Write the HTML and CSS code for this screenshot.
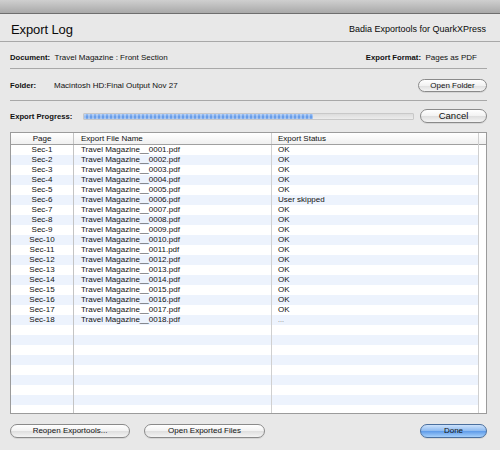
FILE: index.html
```html
<!DOCTYPE html>
<html>
<head>
<meta charset="utf-8">
<link rel="stylesheet" href="styles.css">
</head>
<body>
<div class="window">
  <div class="titlebar"></div>
  <div class="header">
    <div class="title">Export Log</div>
    <div class="brand">Badia Exportools for QuarkXPress</div>
  </div>
  <div class="section">
    <div class="row doc-row">
      <div><span class="lbl">Document:</span> <span class="val">Travel Magazine : Front Section</span></div>
      <div><span class="lbl">Export Format:</span> <span class="val">Pages as PDF</span></div>
    </div>
    <div class="row folder-row">
      <div class="folder"><span class="lbl lbl-folder">Folder:</span><span class="val">Macintosh HD:Final Output Nov 27</span></div>
      <button class="btn btn-small">Open Folder</button>
    </div>
    <div class="progress-row">
      <span class="lbl">Export Progress:</span>
      <div class="track"><div class="fill" style="width: 69.6%"></div></div>
      <button class="btn btn-cancel">Cancel</button>
    </div>
  </div>
  <div class="table">
    <div class="table-main">
      <div class="trow thead">
        <div class="c c1">Page</div>
        <div class="c c2">Export File Name</div>
        <div class="c c3">Export Status</div>
      </div>
      <div class="tbody">
        <div class="trow"><div class="c c1">Sec-1</div><div class="c c2">Travel Magazine__0001.pdf</div><div class="c c3">OK</div></div>
        <div class="trow"><div class="c c1">Sec-2</div><div class="c c2">Travel Magazine__0002.pdf</div><div class="c c3">OK</div></div>
        <div class="trow"><div class="c c1">Sec-3</div><div class="c c2">Travel Magazine__0003.pdf</div><div class="c c3">OK</div></div>
        <div class="trow"><div class="c c1">Sec-4</div><div class="c c2">Travel Magazine__0004.pdf</div><div class="c c3">OK</div></div>
        <div class="trow"><div class="c c1">Sec-5</div><div class="c c2">Travel Magazine__0005.pdf</div><div class="c c3">OK</div></div>
        <div class="trow"><div class="c c1">Sec-6</div><div class="c c2">Travel Magazine__0006.pdf</div><div class="c c3">User skipped</div></div>
        <div class="trow"><div class="c c1">Sec-7</div><div class="c c2">Travel Magazine__0007.pdf</div><div class="c c3">OK</div></div>
        <div class="trow"><div class="c c1">Sec-8</div><div class="c c2">Travel Magazine__0008.pdf</div><div class="c c3">OK</div></div>
        <div class="trow"><div class="c c1">Sec-9</div><div class="c c2">Travel Magazine__0009.pdf</div><div class="c c3">OK</div></div>
        <div class="trow"><div class="c c1">Sec-10</div><div class="c c2">Travel Magazine__0010.pdf</div><div class="c c3">OK</div></div>
        <div class="trow"><div class="c c1">Sec-11</div><div class="c c2">Travel Magazine__0011.pdf</div><div class="c c3">OK</div></div>
        <div class="trow"><div class="c c1">Sec-12</div><div class="c c2">Travel Magazine__0012.pdf</div><div class="c c3">OK</div></div>
        <div class="trow"><div class="c c1">Sec-13</div><div class="c c2">Travel Magazine__0013.pdf</div><div class="c c3">OK</div></div>
        <div class="trow"><div class="c c1">Sec-14</div><div class="c c2">Travel Magazine__0014.pdf</div><div class="c c3">OK</div></div>
        <div class="trow"><div class="c c1">Sec-15</div><div class="c c2">Travel Magazine__0015.pdf</div><div class="c c3">OK</div></div>
        <div class="trow"><div class="c c1">Sec-16</div><div class="c c2">Travel Magazine__0016.pdf</div><div class="c c3">OK</div></div>
        <div class="trow"><div class="c c1">Sec-17</div><div class="c c2">Travel Magazine__0017.pdf</div><div class="c c3">OK</div></div>
        <div class="trow"><div class="c c1">Sec-18</div><div class="c c2">Travel Magazine__0018.pdf</div><div class="c c3 dots">...</div></div>
        <div class="trow"><div class="c c1"></div><div class="c c2"></div><div class="c c3"></div></div>
        <div class="trow"><div class="c c1"></div><div class="c c2"></div><div class="c c3"></div></div>
        <div class="trow"><div class="c c1"></div><div class="c c2"></div><div class="c c3"></div></div>
        <div class="trow"><div class="c c1"></div><div class="c c2"></div><div class="c c3"></div></div>
        <div class="trow"><div class="c c1"></div><div class="c c2"></div><div class="c c3"></div></div>
        <div class="trow"><div class="c c1"></div><div class="c c2"></div><div class="c c3"></div></div>
        <div class="trow"><div class="c c1"></div><div class="c c2"></div><div class="c c3"></div></div>
        <div class="trow"><div class="c c1"></div><div class="c c2"></div><div class="c c3"></div></div>
        <div class="trow"><div class="c c1"></div><div class="c c2"></div><div class="c c3"></div></div>
      </div>
    </div>
    <div class="scroll">
      <div class="scroll-head"></div>
    </div>
  </div>
  <div class="footer">
    <div class="footer-left">
      <button class="btn btn-reopen">Reopen Exportools...</button>
      <button class="btn btn-open">Open Exported Files</button>
    </div>
    <button class="btn btn-done">Done</button>
  </div>
</div>
</body>
</html>
```

FILE: styles.css
```css
* { box-sizing: border-box; }
html, body {
  margin: 0;
  padding: 0;
  width: 500px;
  height: 450px;
  overflow: hidden;
  background: #e8e8e8;
  font-family: "Liberation Sans", Arial, sans-serif;
  color: #111;
}
.window {
  width: 500px;
  height: 450px;
  display: flex;
  flex-direction: column;
}
.titlebar {
  height: 14px;
  background: linear-gradient(#cfcfcf, #a9a9a9);
  border-bottom: 1px solid #6e6e6e;
  flex: none;
}
.header {
  height: 28px;
  display: flex;
  justify-content: space-between;
  align-items: center;
  padding: 3px 14px 0 11px;
  border-bottom: 1px solid #a8a8a8;
  flex: none;
}
.title {
  font-size: 13px;
  color: #0a0a0a;
  letter-spacing: -0.1px;
}
.brand {
  font-size: 9px;
  color: #0a0a0a;
}
.section {
  padding: 0 13px 0 10px;
  flex: none;
}
.row {
  display: flex;
  justify-content: space-between;
  align-items: center;
  border-bottom: 1px solid #a8a8a8;
}
.doc-row {
  height: 27px;
  padding-right: 10px;
}
.folder-row {
  height: 32px;
  padding-top: 1px;
}
.lbl {
  font-weight: bold;
  font-size: 7.7px;
}
.val {
  font-size: 8px;
}
.folder {
  display: flex;
  align-items: center;
}
.lbl-folder {
  width: 44px;
}
.progress-row {
  height: 30px;
  display: flex;
  align-items: center;
}
.progress-row .lbl {
  width: 73px;
}
.track {
  width: 331px;
  height: 7px;
  background: linear-gradient(#dcdcdc, #ececec);
  border: 1px solid #c8c8c8;
  border-radius: 1px;
  overflow: hidden;
}
.fill {
  height: 100%;
  background:
    repeating-linear-gradient(90deg, rgba(255,255,255,0.35) 0 2px, rgba(255,255,255,0) 2px 4px),
    linear-gradient(#9cc0f3, #5f97e6 60%, #8db5ef);
}
.btn {
  font-family: "Liberation Sans", Arial, sans-serif;
  font-size: 8px;
  color: #111;
  height: 14px;
  padding: 0;
  border: 1px solid #8a8a8a;
  border-radius: 7px;
  background: linear-gradient(#ffffff, #f2f2f2 50%, #dedede 51%, #f4f4f4);
  line-height: 12px;
  text-align: center;
  box-shadow: 0 1px 0 rgba(0,0,0,0.08);
}
.btn-small {
  width: 69px;
  height: 13px;
  line-height: 11px;
}
.btn-cancel {
  width: 67px;
  margin-left: 6px;
  font-size: 9.5px;
}
.table {
  margin: 1px 13px 0 10px;
  height: 282px;
  border: 1px solid #9b9b9b;
  background: #fff;
  display: flex;
  overflow: hidden;
  flex: none;
}
.table-main {
  flex: 1;
  display: flex;
  flex-direction: column;
  overflow: hidden;
}
.trow {
  display: flex;
  height: 10px;
  flex: none;
}
.thead {
  height: 12px;
  background: linear-gradient(#ffffff, #f0f0f0);
  border-bottom: 1px solid #a0a0a0;
}
.thead .c {
  line-height: 11px;
}
.tbody .trow:nth-child(even) {
  background: #edf3fd;
}
.c {
  font-size: 8px;
  line-height: 10px;
  white-space: nowrap;
  overflow: hidden;
}
.c1 {
  width: 63px;
  text-align: center;
  border-right: 1px solid #c4c4c4;
}
.c2 {
  width: 198px;
  padding-left: 7px;
  border-right: 1px solid #d0d0d0;
}
.c3 {
  flex: 1;
  padding-left: 6px;
}
.dots {
  color: #777;
  font-size: 7px;
}
.scroll {
  width: 8px;
  border-left: 1px solid #cfcfcf;
  background: #fff;
  flex: none;
}
.scroll-head {
  height: 12px;
  border-bottom: 1px solid #a0a0a0;
  background: linear-gradient(#ffffff, #f0f0f0);
}
.footer {
  display: flex;
  justify-content: space-between;
  align-items: center;
  padding: 10px 13px 0 10px;
}
.footer-left {
  display: flex;
  gap: 14px;
}
.btn-reopen {
  width: 120px;
}
.btn-open {
  width: 121px;
}
.btn-done {
  width: 67px;
  border-color: #4a6f9e;
  background: linear-gradient(#cde2fb, #8dbaf0 50%, #5d9ae8 51%, #a6d0fb);
}
```
